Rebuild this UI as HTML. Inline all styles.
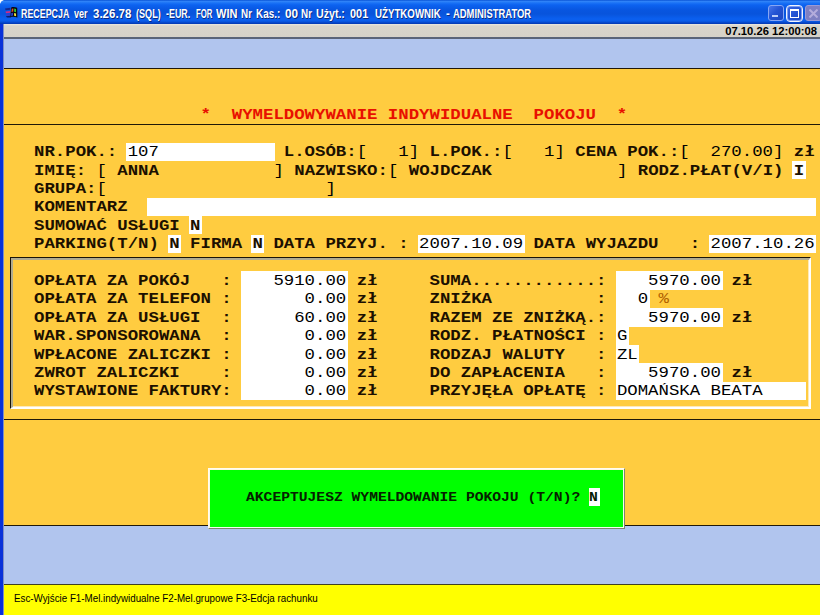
<!DOCTYPE html>
<html lang="pl">
<head>
<meta charset="utf-8">
<title>RECEPCJA</title>
<style>
html,body{margin:0;padding:0;}
body{width:820px;height:615px;overflow:hidden;position:relative;background:#b1c5ee;font-family:"Liberation Mono",monospace;}
#win{position:absolute;left:0;top:0;width:820px;height:615px;overflow:hidden;background:#b1c5ee;}
#tb{position:absolute;left:0;top:0;width:820px;height:24px;background:linear-gradient(to bottom,#0a54d6 0px,#2e82f8 1.5px,#1a72f6 3px,#0c62f0 5px,#0856e0 10px,#0854dc 14px,#0b60f0 19px,#0a5ce8 21px,#0648cc 22.5px,#0338b0 24px);}
#tbtxt{position:absolute;left:20.5px;top:6.3px;height:16px;width:520px;line-height:16px;color:#fff;font-family:"Liberation Sans",sans-serif;font-weight:bold;font-size:12.4px;white-space:pre;text-shadow:1px 1px 0 #0a2a80;}
#tbtxt span{position:absolute;top:0;transform-origin:0 50%;}
#corner{position:absolute;left:0;top:0;width:4px;height:4px;background:radial-gradient(circle at 4.5px 4.5px,rgba(255,255,255,0) 4px,#fff 4.6px);}
#ico{position:absolute;left:4px;top:6px;width:15px;height:13px;}
.tbb{position:absolute;top:5px;width:16px;height:16px;box-sizing:border-box;border:1px solid #86a6f4;border-radius:3px;background:linear-gradient(135deg,#4a78ec 0%,#2454d4 45%,#1c46c0 100%);}
#bmin{left:768px;}
#bmin i{position:absolute;left:3px;top:9px;width:6px;height:2px;background:#bccdf8;}
#bmax{left:786px;width:17px;border:1px solid #f0f4ff;box-shadow:inset 0 0 0 1px #7c9cf0;border-radius:4px;top:5px;height:17px;background:linear-gradient(135deg,#3a68e4 0%,#2050d0 60%,#1a44bc 100%);}
#bmax i{position:absolute;left:3px;top:3px;width:9px;height:9px;box-sizing:border-box;border:1px solid #fff;border-top-width:2px;}
#bcls{left:805px;width:17px;border-color:#9a9ad4;background:#7f80c2;}
#bcls svg{position:absolute;left:3px;top:3px;width:9px;height:9px;}
#lb{position:absolute;left:0;top:24px;width:3px;height:591px;background:#0831d9;border-right:1px solid #7f8fc4;z-index:5;}
#menu{position:absolute;left:3px;top:24px;width:817px;height:13px;background:linear-gradient(to bottom,#ece9e0 0px,#d8d4ca 2px,#d6d2c8 13px);}
#ml{position:absolute;left:3px;top:37px;width:817px;height:2px;background:#5a6478;}
#clock{transform-origin:100% 50%;transform:scaleX(1.02);position:absolute;right:3px;top:25px;height:13px;line-height:13px;font-family:"Liberation Sans",sans-serif;font-weight:bold;font-size:11px;color:#000;white-space:pre;}
#yel{position:absolute;left:3px;top:69px;width:817px;height:457px;background:#ffcc40;}
.hl{position:absolute;left:3px;width:817px;height:1px;background:#201808;}
.w{position:absolute;background:#fff;}
.r{position:absolute;left:34px;height:18px;line-height:18px;font-size:17.35px;font-weight:bold;color:#1c1000;white-space:pre;transform-origin:0 13.4px;transform:scaleY(0.86);}
.title{color:#e81000;}
.n{font-weight:normal;color:#000;}
.pct{font-weight:normal;color:#b06000;}
#frame{position:absolute;left:10px;top:257px;width:801px;height:152px;box-sizing:border-box;border:1px solid;border-color:#1a1408 #fff #fff #1a1408;}
#frame i{position:absolute;left:0;top:0;right:0;bottom:0;border:solid;border-width:2px 1px 1px 2px;border-color:#b0ab90 #fff #fff #b0ab90;box-shadow:inset -1px -1px 0 #ffe9b8;}
#grn{position:absolute;left:208px;top:468px;width:417px;height:61px;box-sizing:border-box;background:#00ff00;border:1px solid;border-color:#fffdf0 #7c846c #7c846c #fffdf0;box-shadow:inset 1px 1px 0 #fff8e0,inset -1px -1px 0 #f4fff0;}
#grnw{left:588.5px;top:488px;width:11.5px;height:17.5px;}
#grntxt{position:absolute;left:246px;top:489.5px;height:18px;line-height:18px;font-size:14.67px;font-weight:bold;color:#062000;white-space:pre;transform-origin:0 13.5px;transform:translateY(-2px) scaleY(0.86);}
#sl{position:absolute;left:3px;top:584px;width:817px;height:1px;background:#404020;}
#sb{position:absolute;left:3px;top:585px;width:817px;height:30px;background:#ffff00;}
#sbt{position:absolute;left:13.5px;top:592px;height:14px;line-height:14px;font-family:"Liberation Sans",sans-serif;font-size:10px;color:#000;white-space:pre;transform-origin:0 50%;transform:scaleX(0.978);}
</style>
</head>
<body>
<div id="win">
<div id="tb"></div>
<div id="tbtxt"><span style="left:0.0px;transform:scaleX(0.716)">RECEPCJA </span><span style="left:53.3px;transform:scaleX(0.731)">ver </span><span style="left:72.4px;transform:scaleX(0.929)">3.26.78 </span><span style="left:115.7px;transform:scaleX(0.735)">(SQL) </span><span style="left:145.9px;transform:scaleX(0.717)">-EUR. </span><span style="left:175.5px;transform:scaleX(0.627)">FOR </span><span style="left:195.7px;transform:scaleX(0.892)">WIN </span><span style="left:220.5px;transform:scaleX(0.798)">Nr </span><span style="left:235.8px;transform:scaleX(0.798)">Kas.: </span><span style="left:264.4px;transform:scaleX(0.949)">00 </span><span style="left:280.8px;transform:scaleX(0.798)">Nr </span><span style="left:295.8px;transform:scaleX(0.857)">Użyt.: </span><span style="left:329.3px;transform:scaleX(0.880)">001  </span><span style="left:354.9px;transform:scaleX(0.783)">UŻYTKOWNIK </span><span style="left:425.5px;transform:scaleX(0.918)">- </span><span style="left:432.9px;transform:scaleX(0.760)">ADMINISTRATOR </span></div>
<div id="corner"></div>
<svg id="ico" viewBox="0 0 15 13">
<path d="M1 2.4 L6.4 1.8 L6.4 3.8 L1.6 4.2 Z" fill="#14288c"/>
<path d="M1.6 5.4 L6.4 4.9 L6.4 6.8 L2 7.2 Z" fill="#d02c84"/>
<path d="M2 7.9 L6.4 7.6 L6.4 9.2 L2.4 9.4 Z" fill="#3838d0"/>
<path d="M1.8 10.2 L7 9.8 L7 11.6 L3 11.4 Z" fill="#10186c"/>
<path d="M7.2 1.4 C9 0.9 11 1 13.2 1.8 L13.4 11.4 C11 10.6 8.6 10.4 6.4 11 Z" fill="#08080e"/>
<path d="M7.8 2.8 L9.4 2.5 L9.2 5.6 L7.5 5.9 Z" fill="#e0502c"/>
<path d="M10.2 2.5 L12 3 L12 6.2 L10.2 5.7 Z" fill="#2cc82c"/>
<path d="M7.3 7 L9.1 6.7 L9 9.6 L7.1 9.9 Z" fill="#2c3ccc"/>
<path d="M10.1 6.9 L12 7.4 L12.1 10.3 L10.1 9.8 Z" fill="#f0e040"/>
</svg>
<div id="lb"></div>
<div class="tbb" id="bmin"><i></i></div>
<div class="tbb" id="bmax"><i></i></div>
<div class="tbb" id="bcls"><svg viewBox="0 0 9 9"><path d="M0.5 0.5 L8.5 8.5 M8.5 0.5 L0.5 8.5" stroke="#b4acdc" stroke-width="2" fill="none"/></svg></div>
<div id="menu"></div>
<div id="ml"></div>
<div id="clock">07.10.26 12:00:08</div>
<div class="hl" style="top:68px"></div>
<div id="yel"></div>
<div class="hl" style="top:124px"></div>
<div class="hl" style="top:419px"></div>
<div class="hl" style="top:525px"></div>
<div id="frame"><i></i></div>
<div class="w" style="left:126.2px;top:143px;width:148.7px;height:18px"></div>
<div class="w" style="left:792.4px;top:161px;width:13.4px;height:18px"></div>
<div class="w" style="left:147.0px;top:198px;width:669.2px;height:18px"></div>
<div class="w" style="left:188.7px;top:216px;width:13.4px;height:18px"></div>
<div class="w" style="left:167.8px;top:235px;width:13.4px;height:18px"></div>
<div class="w" style="left:251.1px;top:235px;width:13.4px;height:18px"></div>
<div class="w" style="left:417.7px;top:235px;width:107.1px;height:18px"></div>
<div class="w" style="left:709.1px;top:235px;width:107.1px;height:18px"></div>
<div class="w" style="left:240.7px;top:271px;width:107.1px;height:19px"></div>
<div class="w" style="left:615.5px;top:271px;width:107.1px;height:19px"></div>
<div class="w" style="left:240.7px;top:290px;width:107.1px;height:18px"></div>
<div class="w" style="left:615.5px;top:290px;width:34.2px;height:18px"></div>
<div class="w" style="left:240.7px;top:308px;width:107.1px;height:19px"></div>
<div class="w" style="left:615.5px;top:308px;width:107.1px;height:19px"></div>
<div class="w" style="left:240.7px;top:327px;width:107.1px;height:18px"></div>
<div class="w" style="left:615.5px;top:327px;width:13.4px;height:18px"></div>
<div class="w" style="left:240.7px;top:345px;width:107.1px;height:18px"></div>
<div class="w" style="left:615.5px;top:345px;width:23.8px;height:18px"></div>
<div class="w" style="left:240.7px;top:363px;width:107.1px;height:19px"></div>
<div class="w" style="left:615.5px;top:363px;width:107.1px;height:19px"></div>
<div class="w" style="left:240.7px;top:382px;width:107.1px;height:18px"></div>
<div class="w" style="left:615.5px;top:382px;width:190.4px;height:18px"></div>
<div class="r title" style="top:106.3px">                *  WYMELDOWYWANIE INDYWIDUALNE  POKOJU  *</div>
<div class="r" style="top:143.1px">NR.POK.: <span class="n">107           </span> L.OSÓB:<span class="n">[   1]</span> L.POK.:<span class="n">[   1]</span> CENA POK.:<span class="n">[  270.00]</span> zł</div>
<div class="r" style="top:161.5px">IMIĘ: <span class="n">[</span> ANNA           <span class="n">]</span> NAZWISKO:<span class="n">[</span> WOJDCZAK            <span class="n">]</span> RODZ.PŁAT(V/I) I</div>
<div class="r" style="top:179.9px">GRUPA:<span class="n">[                     ]</span></div>
<div class="r" style="top:198.3px">KOMENTARZ  <span class="n">                                                                </span></div>
<div class="r" style="top:216.7px">SUMOWAĆ USŁUGI N</div>
<div class="r" style="top:235.1px">PARKING(T/N) N FIRMA N DATA PRZYJ. : <span class="n">2007.10.09</span> DATA WYJAZDU   : <span class="n">2007.10.26</span></div>
<div class="r" style="top:271.9px">OPŁATA ZA POKÓJ   : <span class="n">   5910.00</span> zł     SUMA............: <span class="n">   5970.00</span> zł</div>
<div class="r" style="top:290.3px">OPŁATA ZA TELEFON : <span class="n">      0.00</span> zł     ZNIŻKA          : <span class="n">  0</span> <span class="pct">%</span></div>
<div class="r" style="top:308.7px">OPŁATA ZA USŁUGI  : <span class="n">     60.00</span> zł     RAZEM ZE ZNIŻKĄ.: <span class="n">   5970.00</span> zł</div>
<div class="r" style="top:327.1px">WAR.SPONSOROWANA  : <span class="n">      0.00</span> zł     RODZ. PŁATNOŚCI : <span class="n">G</span></div>
<div class="r" style="top:345.5px">WPŁACONE ZALICZKI : <span class="n">      0.00</span> zł     RODZAJ WALUTY   : <span class="n">ZL</span></div>
<div class="r" style="top:363.9px">ZWROT ZALICZKI    : <span class="n">      0.00</span> zł     DO ZAPŁACENIA   : <span class="n">   5970.00</span> zł</div>
<div class="r" style="top:382.3px">WYSTAWIONE FAKTURY: <span class="n">      0.00</span> zł     PRZYJĘŁA OPŁATĘ : <span class="n">DOMAŃSKA BEATA    </span></div>
<div id="grn"></div>
<div class="w" id="grnw"></div>
<div id="grntxt">AKCEPTUJESZ WYMELDOWANIE POKOJU (T/N)? N</div>
<div id="sl"></div>
<div id="sb"></div>
<div id="sbt">Esc-Wyjście F1-Mel.indywidualne F2-Mel.grupowe F3-Edcja rachunku</div>
</div>
</body>
</html>
